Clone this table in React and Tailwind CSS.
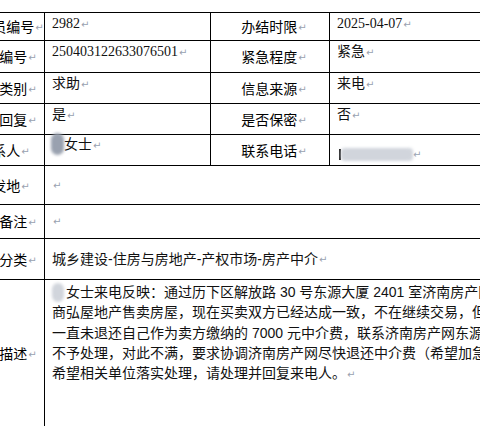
const cjk = "font-['Liberation_Serif','Noto_Sans_CJK_SC',serif]";
const sans = "font-['Liberation_Sans','Noto_Sans_CJK_SC',sans-serif]";

function Mark() {
  return <span className="ml-[1px] text-[10px] text-gray-400 font-['DejaVu_Sans',sans-serif]">↵</span>;
}

function Label({ children }) {
  return (
    <div className="bg-white flex items-center justify-center pl-[8px] pt-[3px] text-[14px] leading-[20px] text-black whitespace-nowrap">
      {children}
      <Mark />
    </div>
  );
}

function Value({ children, span }) {
  return (
    <div className={`bg-white pl-[7px] pt-[1px] text-[14px] leading-[20px] text-[#111] whitespace-nowrap ${span ? "col-span-3" : ""}`}>
      {children}
      <Mark />
    </div>
  );
}

function Blob({ className }) {
  return <span className={`inline-block bg-gray-300 blur-[1.5px] rounded-full align-middle ${className}`} />;
}

export default function App() {
  const lines = [
    <>
      <Blob className="w-[12px] h-[19px] mr-[2px] -mt-[2px]" />
      女士来电反映：通过历下区解放路 30 号东源大厦 2401 室济南房产网东源大厦店
    </>,
    "商弘屋地产售卖房屋，现在买卖双方已经达成一致，不在继续交易，但中介",
    "一直未退还自己作为卖方缴纳的 7000 元中介费，联系济南房产网东源大厦店",
    "不予处理，对此不满，要求协调济南房产网尽快退还中介费（希望加急处理）",
    <>
      希望相关单位落实处理，请处理并回复来电人。
      <Mark />
    </>,
  ];

  return (
    <div className={`w-[480px] h-[426px] overflow-hidden bg-white pt-[12px] ${cjk}`}>
      <div className="ml-[-45px] w-[640px] grid grid-cols-[88px_165px_118px_1fr] grid-rows-[27px_31px_30px_30px_30px_38px_33px_40px_146px] gap-px bg-black p-px">
        <Label>坐席员编号</Label>
        <Value>2982</Value>
        <Label>办结时限</Label>
        <Value>2025-04-07</Value>

        <Label>工单编号</Label>
        <Value>250403122633076501</Value>
        <Label>紧急程度</Label>
        <Value>紧急</Value>

        <Label>诉求类别</Label>
        <Value>求助</Value>
        <Label>信息来源</Label>
        <Value>来电</Value>

        <Label>是否回复</Label>
        <Value>是</Value>
        <Label>是否保密</Label>
        <Value>否</Value>

        <Label>联系人</Label>
        <div className="bg-white pl-[6px] text-[14px] leading-[20px] text-[#111] whitespace-nowrap">
          <Blob className="w-[13px] h-[22px] -mt-[3px] bg-gray-400" />
          女士
          <Mark />
        </div>
        <Label>联系电话</Label>
        <div className="bg-white pl-[9px] pt-[9px] flex items-center text-[14px] leading-[20px] whitespace-nowrap">
          <span className="w-[2px] h-[11px] bg-[#222]" />
          <span className="w-[72px] h-[13px] bg-gray-300 blur-[1.5px] rounded-sm" />
          <span className="text-[10px] text-gray-400 font-['DejaVu_Sans',sans-serif]">↵</span>
        </div>

        <Label>事发地</Label>
        <div className="col-span-3 bg-white pl-[7px] flex items-center">
          <Mark />
        </div>

        <Label>其他备注</Label>
        <div className="col-span-3 bg-white pl-[7px] flex items-center">
          <Mark />
        </div>

        <Label>问题分类</Label>
        <div className={`col-span-3 bg-white pl-[7px] flex items-center text-[14px] text-[#111] whitespace-nowrap ${sans}`}>
          城乡建设-住房与房地产-产权市场-房产中介
          <Mark />
        </div>

        <Label>问题描述</Label>
        <div className={`col-span-3 bg-white pl-[7px] pt-[2px] text-[14px] leading-[20.3px] text-[#111] ${sans}`}>
          {lines.map((l, i) => (
            <div key={i} className="whitespace-nowrap">{l}</div>
          ))}
        </div>
      </div>
    </div>
  );
}
